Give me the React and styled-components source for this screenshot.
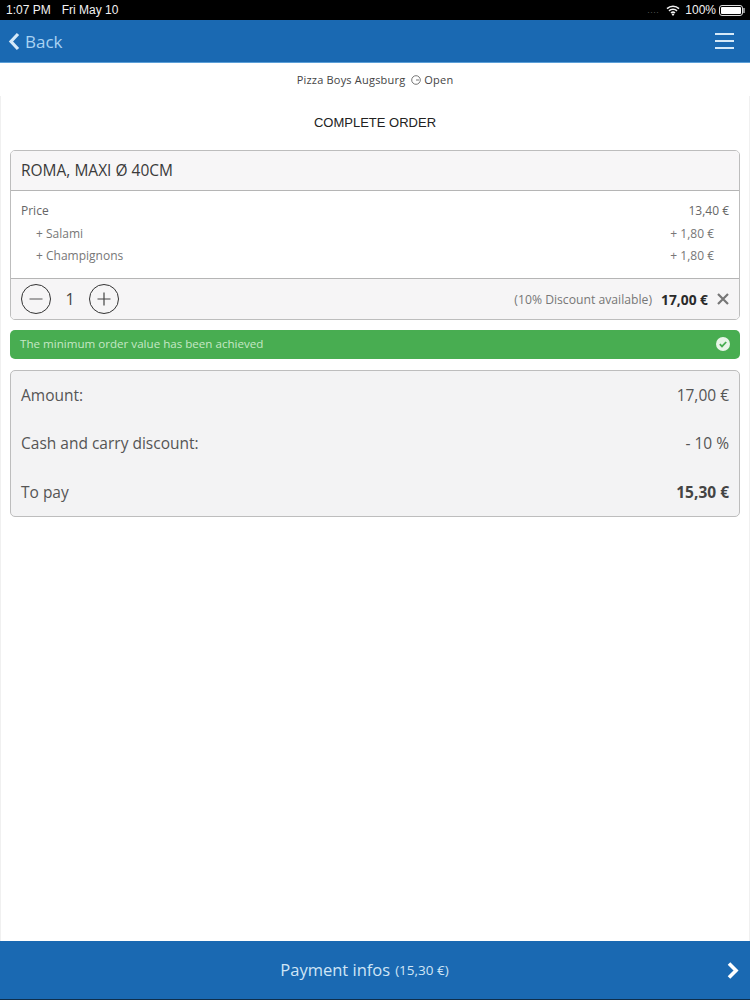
import React from 'react'
import styled, { createGlobalStyle } from 'styled-components'

const Global = createGlobalStyle`
  html, body { margin: 0; padding: 0; background: #fff; }
  body { font-family: "Open Sans", "Liberation Sans", sans-serif; color: #444; }
  * { box-sizing: border-box; }
`

const Page = styled.div`
  width: 750px;
  height: 1000px;
  display: flex;
  flex-direction: column;
  overflow: hidden;
`

const StatusBar = styled.div`
  height: 20px;
  flex: none;
  background: #000;
  color: #f2f2f2;
  font-family: "Liberation Sans", Arial, sans-serif;
  font-size: 12px;
  display: flex;
  align-items: center;
  justify-content: space-between;
  padding: 0 7px 0 6px;
`

const StatusGroup = styled.div`
  display: flex;
  align-items: center;
  gap: ${p => p.$gap || 5}px;
`

const Signal = styled.span`
  color: #555;
  font-size: 9px;
  letter-spacing: 0.5px;
  margin-right: 2px;
`

const Battery = styled.span`
  position: relative;
  width: 24px;
  height: 11px;
  margin-left: -2px;
  border: 1px solid #ddd;
  border-radius: 3px;
  padding: 1px;
  display: flex;
  &::before {
    content: '';
    flex: 1;
    background: #fff;
    border-radius: 1px;
  }
  &::after {
    content: '';
    position: absolute;
    right: -3px;
    top: 2px;
    width: 2px;
    height: 5px;
    background: #888;
  }
`

const NavBar = styled.div`
  height: 43px;
  flex: none;
  background: #1a69b2;
  border-bottom: 1px solid #5b9fd8;
  display: flex;
  align-items: center;
  justify-content: space-between;
  padding: 0 16px 0 8px;
  color: #a9d3f2;
  font-size: 17px;
`

const BackLink = styled.div`
  display: flex;
  align-items: center;
  gap: 5px;
`

const Burger = styled.div`
  width: 19px;
  display: flex;
  flex-direction: column;
  gap: 5px;
  span {
    height: 2px;
    background: #d5e9f8;
  }
`

const ShopBar = styled.div`
  height: 33px;
  flex: none;
  display: flex;
  align-items: center;
  justify-content: center;
  gap: 5px;
  font-size: 11px;
  letter-spacing: 0.2px;
  color: #444;
`

const OpenState = styled.span`
  display: flex;
  align-items: center;
  gap: 3px;
  margin-left: 1px;
`

const Content = styled.div`
  flex: 1;
  padding: 0 9px;
  border-left: 1px solid #f0f0f0;
  border-right: 1px solid #f0f0f0;
  display: flex;
  flex-direction: column;
`

const Title = styled.h1`
  margin: 0;
  height: 54px;
  display: flex;
  align-items: center;
  justify-content: center;
  font-family: "Liberation Sans", Arial, sans-serif;
  font-weight: 400;
  font-size: 13px;
  color: #222;
  padding-bottom: 1px;
`

const Card = styled.div`
  border: 1px solid #bdbdbd;
  border-radius: 5px;
  overflow: hidden;
  height: 170px;
  flex: none;
  display: flex;
  flex-direction: column;
`

const CardHead = styled.div`
  height: 40px;
  flex: none;
  background: #f7f6f7;
  border-bottom: 1px solid #b5b5b5;
  display: flex;
  align-items: center;
  padding: 0 10px 1px;
  font-size: 15.5px;
  color: #3a3a3a;
`

const CardBody = styled.div`
  flex: 1;
  padding: 8px 10px 0;
  background: #fff;
`

const PriceRow = styled.div`
  display: flex;
  justify-content: space-between;
  align-items: center;
  height: ${p => (p.$extra ? 21.5 : 23)}px;
  font-size: 12px;
  color: ${p => (p.$extra ? '#777' : '#666')};
  padding: 0 ${p => (p.$extra ? 15 : 0)}px;
  margin-top: ${p => (p.$first ? 1 : 0)}px;
`

const CardFoot = styled.div`
  height: 41px;
  flex: none;
  background: #f6f5f6;
  border-top: 1px solid #b5b5b5;
  display: flex;
  align-items: center;
  padding: 0 10px;
`

const RoundButton = styled.div`
  width: 30px;
  height: 30px;
  border: 1.3px solid #333;
  border-radius: 50%;
  display: flex;
  align-items: center;
  justify-content: center;
  flex: none;
`

const Qty = styled.span`
  width: 38px;
  text-align: center;
  font-size: 16px;
  color: #444;
`

const Discount = styled.span`
  margin-left: auto;
  font-size: 12.2px;
  color: #777;
`

const LineTotal = styled.strong`
  margin-left: 9px;
  font-size: 13.8px;
  font-weight: 700;
  color: #2a2a2a;
`

const Remove = styled.span`
  margin-left: 9px;
  display: flex;
`

const Notice = styled.div`
  margin-top: 10px;
  height: 29px;
  flex: none;
  background: #48ad51;
  border-radius: 5px;
  display: flex;
  align-items: center;
  justify-content: space-between;
  padding: 0 10px 2px;
  font-size: 11.6px;
  color: #c5e8c5;
`

const Summary = styled.div`
  margin-top: 11px;
  height: 147px;
  flex: none;
  background: #f3f3f4;
  border: 1px solid #bdbdbd;
  border-radius: 5px;
  padding: 0 10px;
  display: flex;
  flex-direction: column;
  justify-content: space-around;
`

const SummaryRow = styled.div`
  display: flex;
  justify-content: space-between;
  align-items: center;
  font-size: 15.5px;
  color: #555;
  strong {
    font-weight: 700;
    color: #444;
  }
`

const PayBar = styled.div`
  height: 59px;
  flex: none;
  background: #1a69b2;
  border-bottom: 1px solid #0e2e4c;
  position: relative;
  display: flex;
  align-items: center;
  justify-content: center;
  color: #cfe5f6;
  font-size: 16.5px;
  gap: 5px;
  padding: 0 21px 2px 0;
  small {
    font-size: 13.5px;
    padding-top: 2px;
  }
`

const PayArrow = styled.span`
  position: absolute;
  right: 10px;
  top: 20px;
  display: flex;
`

const Minus = () => (
  <svg width="16" height="16" viewBox="0 0 16 16">
    <path d="M1.5 8h13" stroke="#555" strokeWidth="1.2" />
  </svg>
)

const Plus = () => (
  <svg width="16" height="16" viewBox="0 0 16 16">
    <path d="M1.5 8h13M8 1.5v13" stroke="#444" strokeWidth="1.2" />
  </svg>
)

export default function App() {
  return (
    <Page>
      <Global />
      <StatusBar>
        <StatusGroup $gap={11}>
          <span>1:07 PM</span>
          <span>Fri May 10</span>
        </StatusGroup>
        <StatusGroup>
          <Signal>....</Signal>
          <svg width="14" height="11" viewBox="0 0 14 11">
            <path d="M1 3.6a8.6 8.6 0 0 1 12 0M3 5.9a5.8 5.8 0 0 1 8 0M5 8a3 3 0 0 1 4 0" fill="none" stroke="#f2f2f2" strokeWidth="1.5" />
            <path d="M7 11 5.6 9.3a2 2 0 0 1 2.8 0z" fill="#f2f2f2" />
          </svg>
          <span>100%</span>
          <Battery />
        </StatusGroup>
      </StatusBar>
      <NavBar>
        <BackLink>
          <svg width="12" height="19" viewBox="0 0 12 19">
            <path d="M10 2 3 9.5 10 17" fill="none" stroke="#d5e9f8" strokeWidth="3.2" />
          </svg>
          <span>Back</span>
        </BackLink>
        <Burger>
          <span />
          <span />
          <span />
        </Burger>
      </NavBar>
      <ShopBar>
        <span>Pizza Boys Augsburg</span>
        <OpenState>
          <svg width="10" height="10" viewBox="0 0 10 10">
            <circle cx="5" cy="5" r="4.3" fill="none" stroke="#555" strokeWidth="0.8" />
            <path d="M5 5h3" stroke="#555" strokeWidth="0.8" />
          </svg>
          Open
        </OpenState>
      </ShopBar>
      <Content>
        <Title>COMPLETE ORDER</Title>
        <Card>
          <CardHead>ROMA, MAXI Ø 40CM</CardHead>
          <CardBody>
            <PriceRow>
              <span>Price</span>
              <span>13,40 €</span>
            </PriceRow>
            <PriceRow $extra $first>
              <span>+ Salami</span>
              <span>+ 1,80 €</span>
            </PriceRow>
            <PriceRow $extra>
              <span>+ Champignons</span>
              <span>+ 1,80 €</span>
            </PriceRow>
          </CardBody>
          <CardFoot>
            <RoundButton><Minus /></RoundButton>
            <Qty>1</Qty>
            <RoundButton><Plus /></RoundButton>
            <Discount>(10% Discount available)</Discount>
            <LineTotal>17,00 €</LineTotal>
            <Remove>
              <svg width="12" height="12" viewBox="0 0 12 12">
                <path d="M1 1l10 10M11 1 1 11" stroke="#777" strokeWidth="2.2" />
              </svg>
            </Remove>
          </CardFoot>
        </Card>
        <Notice>
          <span>The minimum order value has been achieved</span>
          <svg width="14" height="14" viewBox="0 0 14 14">
            <circle cx="7" cy="7" r="7" fill="#e8f5e8" />
            <path d="M3.8 7.2 6 9.4l4.2-4.4" fill="none" stroke="#48ad51" strokeWidth="1.8" />
          </svg>
        </Notice>
        <Summary>
          <SummaryRow>
            <span>Amount:</span>
            <span>17,00 €</span>
          </SummaryRow>
          <SummaryRow>
            <span>Cash and carry discount:</span>
            <span>- 10 %</span>
          </SummaryRow>
          <SummaryRow>
            <span>To pay</span>
            <strong>15,30 €</strong>
          </SummaryRow>
        </Summary>
      </Content>
      <PayBar>
        <span>Payment infos</span>
        <small>(15,30 €)</small>
        <PayArrow>
          <svg width="14" height="19" viewBox="0 0 14 19">
            <path d="M3 2.5 10 9.5 3 16.5" fill="none" stroke="#fff" strokeWidth="3.6" />
          </svg>
        </PayArrow>
      </PayBar>
    </Page>
  )
}
